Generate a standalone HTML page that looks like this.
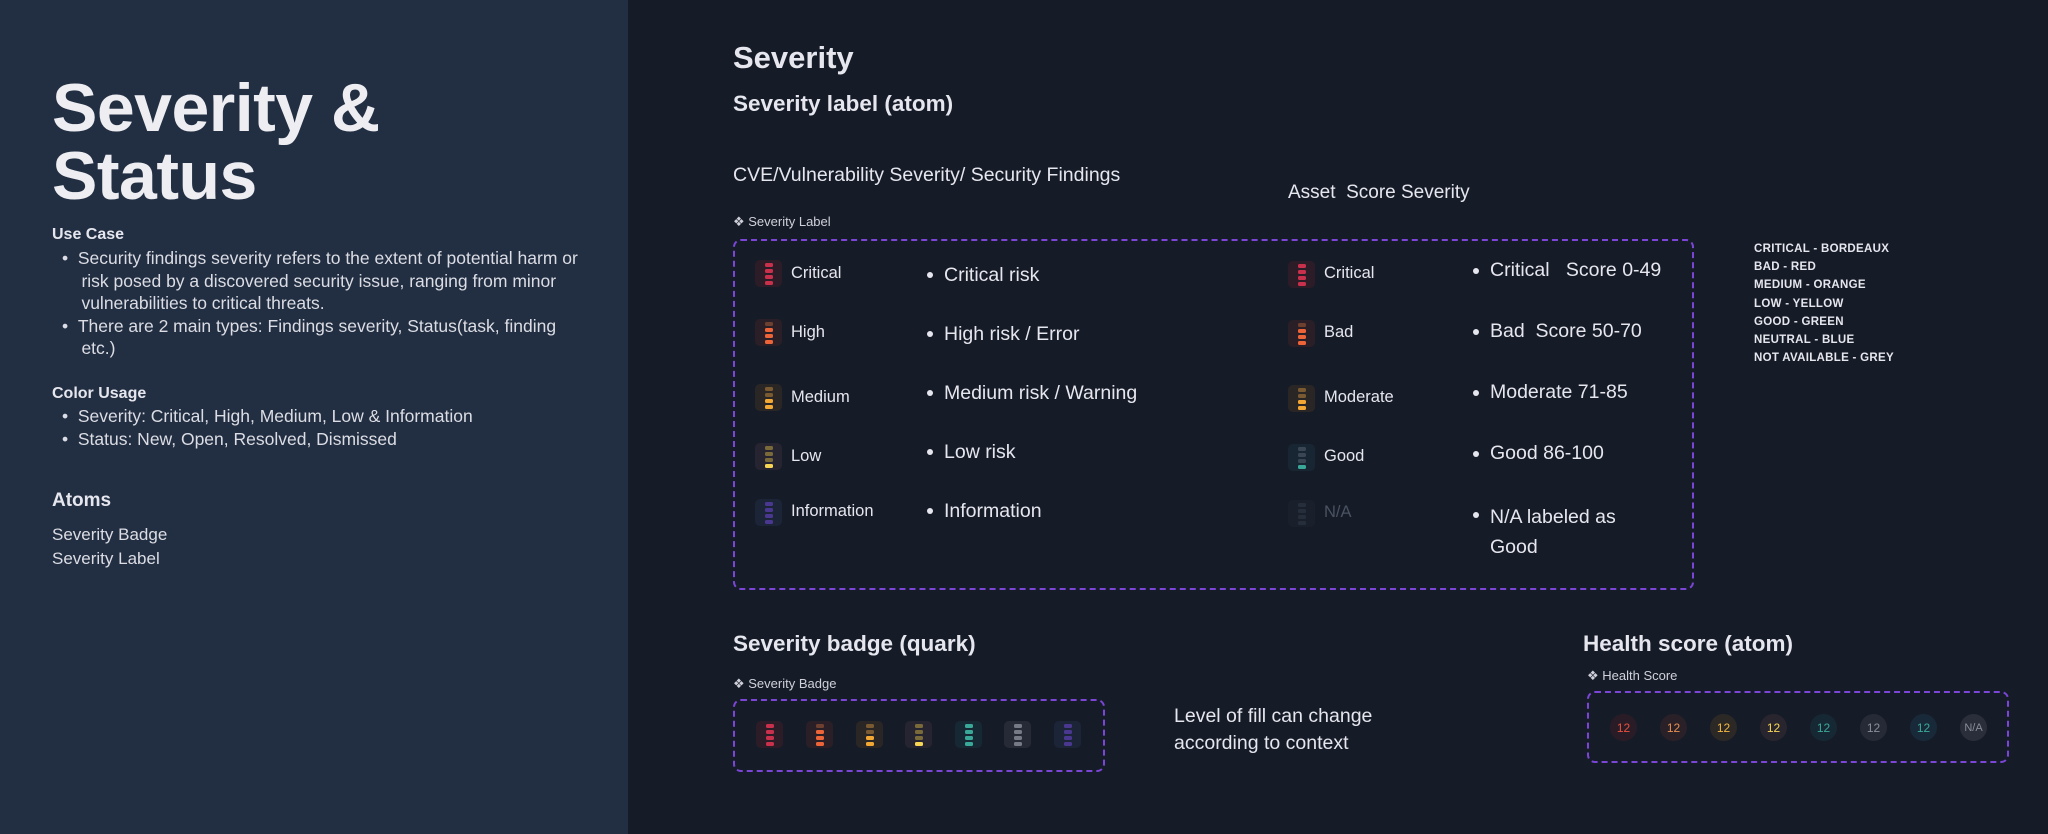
<!DOCTYPE html>
<html><head><meta charset="utf-8"><style>
*{margin:0;padding:0;box-sizing:border-box}
body{width:2048px;height:834px;overflow:hidden;background:#161c27;font-family:"Liberation Sans",sans-serif;color:#e6e6ee;position:relative}
.left{position:absolute;left:0;top:0;width:628px;height:834px;background:#222f43}
.a{position:absolute;white-space:nowrap}
.b{position:absolute;width:27px;height:27px;border-radius:5px;display:flex;flex-direction:column;align-items:center;justify-content:center;gap:2px}
.b i{display:block;width:8px;height:4px;border-radius:1.5px}
.box{position:absolute;border:2px dashed #7b45d8;border-radius:8px}
.c{position:absolute;width:27px;height:27px;border-radius:50%;font-size:12px;display:flex;align-items:center;justify-content:center;top:714px}
.dot{position:absolute;width:6px;height:6px;border-radius:50%;background:#e6e6ee}
</style></head><body>
<div class="left"></div>
<div class="a" style="left:52px;top:74px;font-size:68px;font-weight:bold;line-height:68px;color:#eeeef2;letter-spacing:-0.5px">Severity &amp;<br>Status</div>
<div class="a" style="left:52px;top:226px;font-size:16px;font-weight:bold">Use Case</div>
<div class="a" style="left:62px;top:247px;font-size:17.5px;line-height:22.5px;color:#dcdde4">• &nbsp;Security findings severity refers to the extent of potential harm or<br>&nbsp;&nbsp;&nbsp;&nbsp;risk posed by a discovered security issue, ranging from minor<br>&nbsp;&nbsp;&nbsp;&nbsp;vulnerabilities to critical threats.<br>• &nbsp;There are 2 main types: Findings severity, Status(task, finding<br>&nbsp;&nbsp;&nbsp;&nbsp;etc.)</div>
<div class="a" style="left:52px;top:385px;font-size:16px;font-weight:bold">Color Usage</div>
<div class="a" style="left:62px;top:405px;font-size:17.5px;line-height:22.5px;color:#dcdde4">• &nbsp;Severity: Critical, High, Medium, Low &amp; Information<br>• &nbsp;Status: New, Open, Resolved, Dismissed</div>
<div class="a" style="left:52px;top:490px;font-size:19px;font-weight:bold">Atoms</div>
<div class="a" style="left:52px;top:523px;font-size:17px;line-height:24px;color:#dcdde4">Severity Badge<br>Severity Label</div>

<div class="a" style="left:733px;top:40px;font-size:31px;font-weight:bold">Severity</div>
<div class="a" style="left:733px;top:91px;font-size:22.5px;font-weight:bold">Severity label (atom)</div>
<div class="a" style="left:733px;top:164px;font-size:19.5px">CVE/Vulnerability Severity/ Security Findings</div>
<div class="a" style="left:1288px;top:182px;font-size:19px">Asset &nbsp;Score Severity</div>
<div class="a" style="left:733px;top:214px;font-size:13px;color:#cfd0da">❖ Severity Label</div>
<div class="box" style="left:733px;top:239px;width:961px;height:351px"></div>

<div class="b" style="left:755px;top:260px;background:#2c1c28"><i style="background:#c8304c"></i><i style="background:#c8304c"></i><i style="background:#c8304c"></i><i style="background:#c8304c"></i></div>
<div class="b" style="left:755px;top:319px;background:#2a1f26"><i style="background:#6e4030"></i><i style="background:#ec6438"></i><i style="background:#ec6438"></i><i style="background:#ec6438"></i></div>
<div class="b" style="left:755px;top:384px;background:#2a2626"><i style="background:#7a5a30"></i><i style="background:#7a5a30"></i><i style="background:#f4a834"></i><i style="background:#f4a834"></i></div>
<div class="b" style="left:755px;top:443px;background:#262430"><i style="background:#7a6a3a"></i><i style="background:#7a6a3a"></i><i style="background:#7a6a3a"></i><i style="background:#f8d654"></i></div>
<div class="b" style="left:755px;top:499px;background:#1c2438"><i style="background:#4a3890"></i><i style="background:#4a3890"></i><i style="background:#4a3890"></i><i style="background:#4a3890"></i></div>
<div class="a" style="left:791px;top:264px;font-size:16.5px">Critical</div>
<div class="a" style="left:791px;top:323px;font-size:16.5px">High</div>
<div class="a" style="left:791px;top:388px;font-size:16.5px">Medium</div>
<div class="a" style="left:791px;top:447px;font-size:16.5px">Low</div>
<div class="a" style="left:791px;top:502px;font-size:16.5px">Information</div>
<div class="dot" style="left:927px;top:272px"></div><div class="a" style="left:944px;top:264px;font-size:19.5px">Critical risk</div>
<div class="dot" style="left:927px;top:331px"></div><div class="a" style="left:944px;top:323px;font-size:19.5px">High risk / Error</div>
<div class="dot" style="left:927px;top:390px"></div><div class="a" style="left:944px;top:382px;font-size:19.5px">Medium risk / Warning</div>
<div class="dot" style="left:927px;top:449px"></div><div class="a" style="left:944px;top:441px;font-size:19.5px">Low risk</div>
<div class="dot" style="left:927px;top:508px"></div><div class="a" style="left:944px;top:500px;font-size:19.5px">Information</div>

<div class="b" style="left:1288px;top:261px;background:#2c1c28"><i style="background:#c8304c"></i><i style="background:#c8304c"></i><i style="background:#c8304c"></i><i style="background:#c8304c"></i></div>
<div class="b" style="left:1288px;top:320px;background:#2a1f26"><i style="background:#6e4030"></i><i style="background:#ec6438"></i><i style="background:#ec6438"></i><i style="background:#ec6438"></i></div>
<div class="b" style="left:1288px;top:385px;background:#2a2626"><i style="background:#7a5a30"></i><i style="background:#7a5a30"></i><i style="background:#f4a834"></i><i style="background:#f4a834"></i></div>
<div class="b" style="left:1288px;top:444px;background:#182634"><i style="background:#3a4654"></i><i style="background:#3a4654"></i><i style="background:#3a4654"></i><i style="background:#3aa898"></i></div>
<div class="b" style="left:1288px;top:500px;background:#1a202b"><i style="background:#262e3c"></i><i style="background:#262e3c"></i><i style="background:#262e3c"></i><i style="background:#262e3c"></i></div>
<div class="a" style="left:1324px;top:264px;font-size:16.5px">Critical</div>
<div class="a" style="left:1324px;top:323px;font-size:16.5px">Bad</div>
<div class="a" style="left:1324px;top:388px;font-size:16.5px">Moderate</div>
<div class="a" style="left:1324px;top:447px;font-size:16.5px">Good</div>
<div class="a" style="left:1324px;top:503px;font-size:16.5px;color:#4a5262">N/A</div>
<div class="dot" style="left:1473px;top:268px"></div><div class="a" style="left:1490px;top:259px;font-size:19.5px">Critical &nbsp;&nbsp;Score 0-49</div>
<div class="dot" style="left:1473px;top:329px"></div><div class="a" style="left:1490px;top:320px;font-size:19.5px">Bad &nbsp;Score 50-70</div>
<div class="dot" style="left:1473px;top:390px"></div><div class="a" style="left:1490px;top:381px;font-size:19.5px">Moderate 71-85</div>
<div class="dot" style="left:1473px;top:451px"></div><div class="a" style="left:1490px;top:442px;font-size:19.5px">Good 86-100</div>
<div class="dot" style="left:1473px;top:512px"></div><div class="a" style="left:1490px;top:502px;font-size:19.5px;line-height:30px">N/A labeled as<br>Good</div>

<div class="a" style="left:1754px;top:240px;font-size:11.5px;font-weight:bold;line-height:18.2px;letter-spacing:0.3px">CRITICAL - BORDEAUX<br>BAD - RED<br>MEDIUM - ORANGE<br>LOW - YELLOW<br>GOOD - GREEN<br>NEUTRAL - BLUE<br>NOT AVAILABLE - GREY</div>

<div class="a" style="left:733px;top:631px;font-size:22.5px;font-weight:bold">Severity badge (quark)</div>
<div class="a" style="left:733px;top:676px;font-size:13px;color:#cfd0da">❖ Severity Badge</div>
<div class="box" style="left:733px;top:699px;width:372px;height:73px"></div>
<div class="b" style="left:756px;top:721px;background:#2c1c28"><i style="background:#c8304c"></i><i style="background:#c8304c"></i><i style="background:#c8304c"></i><i style="background:#c8304c"></i></div>
<div class="b" style="left:806px;top:721px;background:#2a1f26"><i style="background:#6e4030"></i><i style="background:#ec6438"></i><i style="background:#ec6438"></i><i style="background:#ec6438"></i></div>
<div class="b" style="left:856px;top:721px;background:#2a2626"><i style="background:#7a5a30"></i><i style="background:#7a5a30"></i><i style="background:#f4a834"></i><i style="background:#f4a834"></i></div>
<div class="b" style="left:905px;top:721px;background:#262430"><i style="background:#7a6a3a"></i><i style="background:#7a6a3a"></i><i style="background:#7a6a3a"></i><i style="background:#f8d654"></i></div>
<div class="b" style="left:955px;top:721px;background:#162834"><i style="background:#3aa898"></i><i style="background:#3aa898"></i><i style="background:#3aa898"></i><i style="background:#3aa898"></i></div>
<div class="b" style="left:1004px;top:721px;background:#262a36"><i style="background:#767a86"></i><i style="background:#767a86"></i><i style="background:#767a86"></i><i style="background:#767a86"></i></div>
<div class="b" style="left:1054px;top:721px;background:#1c2438"><i style="background:#4a3890"></i><i style="background:#4a3890"></i><i style="background:#4a3890"></i><i style="background:#4a3890"></i></div>
<div class="a" style="left:1174px;top:703px;font-size:19.5px;line-height:27px">Level of fill can change<br>according to context</div>

<div class="a" style="left:1583px;top:631px;font-size:22.5px;font-weight:bold">Health score (atom)</div>
<div class="a" style="left:1587px;top:668px;font-size:13px;color:#cfd0da">❖ Health Score</div>
<div class="box" style="left:1587px;top:691px;width:422px;height:72px"></div>
<div class="c" style="left:1610px;background:#2a1c26;color:#e8503c">12</div>
<div class="c" style="left:1660px;background:#2a2028;color:#e89050">12</div>
<div class="c" style="left:1710px;background:#2c2826;color:#f4b840">12</div>
<div class="c" style="left:1760px;background:#28252e;color:#f8d654">12</div>
<div class="c" style="left:1810px;background:#162834;color:#3aa898">12</div>
<div class="c" style="left:1860px;background:#262a36;color:#8a8e9a">12</div>
<div class="c" style="left:1910px;background:#182a3a;color:#3aa898">12</div>
<div class="c" style="left:1960px;background:#2a2e3a;color:#8a8e9a;font-size:11px">N/A</div>
</body></html>
